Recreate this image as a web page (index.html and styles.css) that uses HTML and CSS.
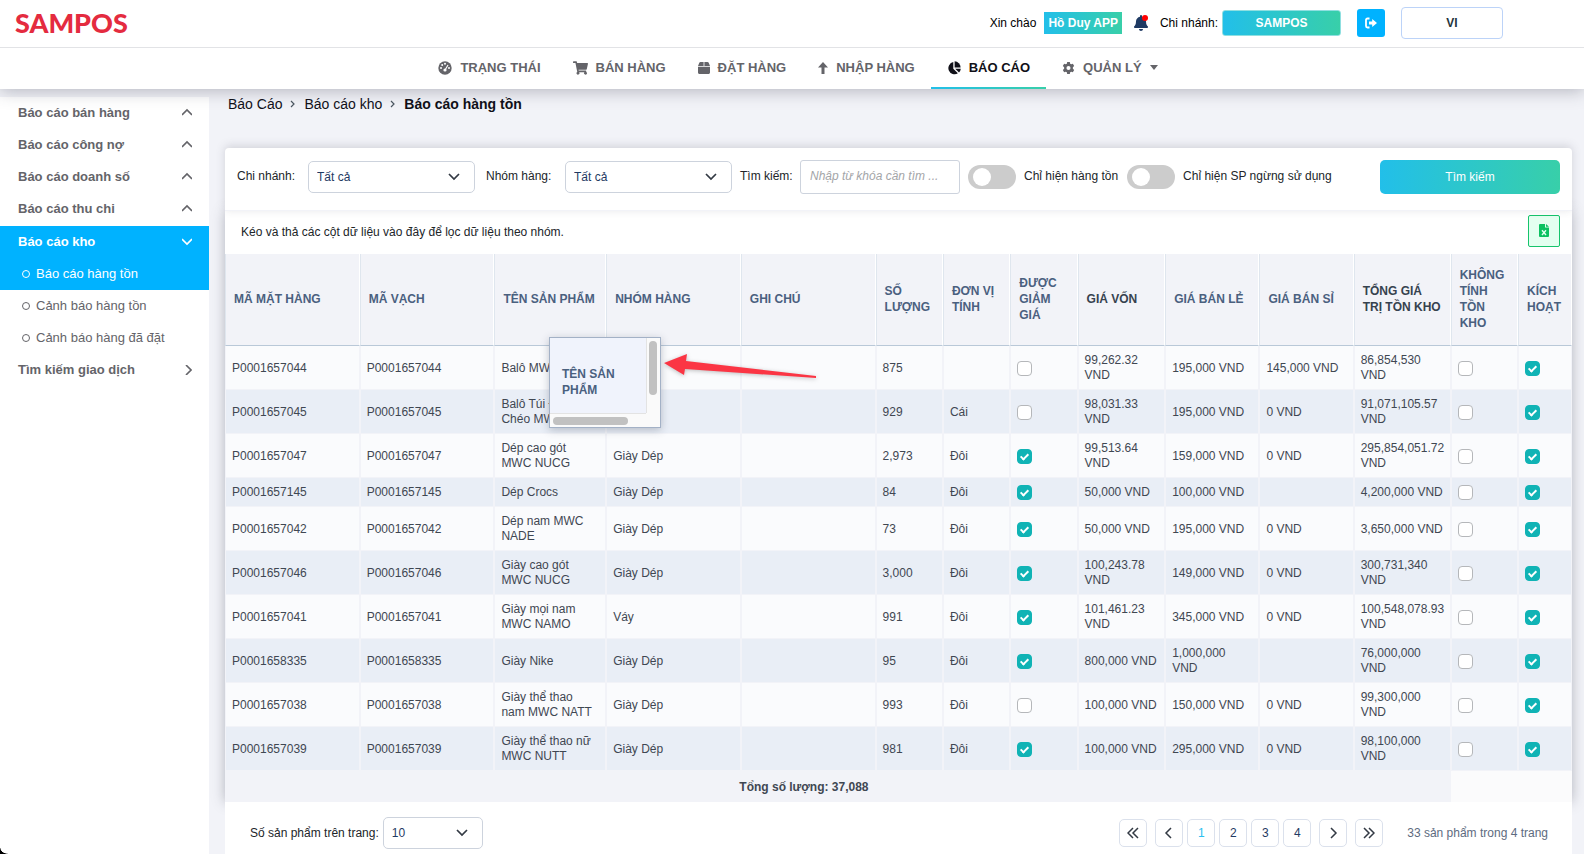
FILE: index.html
```html
<!DOCTYPE html>
<html lang="vi">
<head>
    <meta charset="UTF-8">
    <meta name="viewport" content="width=device-width, initial-scale=1.0">
    <title>Báo cáo hàng tồn</title>
    <link rel="stylesheet" href="styles.css">
</head>
<body>

<!-- Header -->
<header class="header">
    <div class="topbar">
        <a href="#" class="logo">SAMPOS</a>
        <div class="user-area">
            <span>Xin chào</span>
            <a href="#" class="user-name">Hồ Duy APP</a>
            <button type="button" class="bell" aria-label="Thông báo">
                <svg width="14" height="16" viewBox="0 0 448 512"><path fill="#1f3a63" d="M224 512c35 0 64-29 64-64H160c0 35 29 64 64 64zm215-150c-19-21-55-52-55-154 0-78-54-140-128-155V32a32 32 0 1 0-64 0v21C118 68 64 130 64 208c0 102-36 133-55 154-6 6-9 14-9 22 0 16 13 32 32 32h384c19 0 32-16 32-32 0-8-3-16-9-22z"/></svg>
                <span class="dot"></span>
            </button>
            <span>Chi nhánh:</span>
            <button type="button" class="branch">SAMPOS</button>
            <button type="button" class="logout" aria-label="Đăng xuất">
                <svg width="12" height="12" viewBox="0 0 12 12"><path d="M4.500 1.500H2.500a1.500 1.500 0 0 0-1.500 1.500v6a1.500 1.500 0 0 0 1.500 1.500h2" fill="none" stroke="#fff" stroke-width="1.800"/><path fill="#fff" d="M4 4.600h3.200V2L12 6 7.200 10V7.400H4z"/></svg>
            </button>
            <button type="button" class="lang">VI</button>
        </div>
    </div>
    <nav class="main-nav">
        <a href="#">
            <svg width="14" height="14" viewBox="0 0 14 14"><circle cx="7" cy="7" r="6.700"/><g fill="#fff"><circle cx="3" cy="7" r="1"/><circle cx="4.200" cy="4" r="1"/><circle cx="7" cy="2.800" r="1"/><circle cx="11" cy="7" r="1"/><circle cx="7" cy="9" r="1.600"/></g><path d="M7 9l3-5" stroke="#fff" stroke-width="1.200"/></svg>
            TRẠNG THÁI
        </a>
        <a href="#">
            <svg width="15" height="14" viewBox="0 0 576 512"><path d="M528 301l47-208c4-15-8-29-23-29H159l-9-45C148 8 138 0 126 0H24C11 0 0 11 0 24v16c0 13 11 24 24 24h70l70 343a56 56 0 1 0 67 9h210a56 56 0 1 0 64-11l5-25c4-15-8-29-23-29H218l-6-32h293c11 0 20-8 23-18z"/></svg>
            BÁN HÀNG
        </a>
        <a href="#">
            <svg width="12" height="14" viewBox="0 0 12 14"><path d="M2.500 1h3.100v4H0l1.200-3.100C1.400 1.300 1.900 1 2.500 1zM6.400 1h3.100c.6 0 1.100.3 1.300.9L12 5H6.400zM0 5.700h12v5.800c0 .8-.7 1.500-1.500 1.500h-9C.7 13 0 12.300 0 11.500z"/></svg>
            ĐẶT HÀNG
        </a>
        <a href="#">
            <svg width="10" height="14" viewBox="0 0 10 14"><path d="M5 1l5 5.500H6.500V13h-3V6.500H0z"/></svg>
            NHẬP HÀNG
        </a>
        <a href="#" class="active">
            <svg width="14" height="14" viewBox="0 0 14 14"><path d="M6.300 1v6.700l4.600 4.600A6.200 6.200 0 1 1 6.300 1z"/><path d="M7.600.3a6.200 6.200 0 0 1 6 6.200h-6z"/><path d="M8.200 7.800h5.600a6 6 0 0 1-1.800 3.800z"/></svg>
            BÁO CÁO
        </a>
        <a href="#" class="more">
            <svg width="13" height="14" viewBox="0 0 14 14"><path fill-rule="evenodd" d="M5.600.5h2.800l.4 1.800 1.100.7 1.800-.6 1.400 2.400-1.400 1.300v1.800l1.400 1.300-1.400 2.400-1.800-.6-1.100.7-.4 1.800H5.600l-.4-1.800-1.100-.7-1.800.6L.9 9.200l1.400-1.300V6.100L.9 4.800l1.400-2.400 1.800.6 1.100-.7zM7 4.800a2.200 2.200 0 1 0 0 4.400 2.200 2.200 0 0 0 0-4.400z"/></svg>
            QUẢN LÝ
            <svg width="8" height="5" viewBox="0 0 8 5"><path d="M0 0h8L4 5z"/></svg>
        </a>
    </nav>
</header>

<div class="layout">
    <!-- Menu bên trái -->
    <aside class="sidebar">
        <a href="#" class="group">Báo cáo bán hàng <svg class="chev" viewBox="0 0 10 10"><path d="M0 7l5-5 5 5"/></svg></a>
        <a href="#" class="group">Báo cáo công nợ <svg class="chev" viewBox="0 0 10 10"><path d="M0 7l5-5 5 5"/></svg></a>
        <a href="#" class="group">Báo cáo doanh số <svg class="chev" viewBox="0 0 10 10"><path d="M0 7l5-5 5 5"/></svg></a>
        <a href="#" class="group">Báo cáo thu chi <svg class="chev" viewBox="0 0 10 10"><path d="M0 7l5-5 5 5"/></svg></a>
        <a href="#" class="group active">Báo cáo kho <svg class="chev" viewBox="0 0 10 10"><path d="M0 2l5 5 5-5"/></svg></a>
        <a href="#" class="sub active">Báo cáo hàng tồn</a>
        <a href="#" class="sub">Cảnh báo hàng tồn</a>
        <a href="#" class="sub">Cảnh báo hàng đã đặt</a>
        <a href="#" class="group">Tìm kiếm giao dịch <svg class="chev" viewBox="0 0 10 10"><path d="M4 0l5 5-5 5"/></svg></a>
    </aside>

    <main class="content">
        <div class="breadcrumb">
            <a href="#">Báo Cáo</a>
            <svg width="6" height="8" viewBox="0 0 6 8"><path d="M1 1l3 3-3 3"/></svg>
            <a href="#">Báo cáo kho</a>
            <svg width="6" height="8" viewBox="0 0 6 8"><path d="M1 1l3 3-3 3"/></svg>
            <strong>Báo cáo hàng tồn</strong>
        </div>

        <section class="report">
            <!-- Bộ lọc -->
            <form class="filters">
                <label for="chiNhanh" class="label-branch">Chi nhánh:</label>
                <select id="chiNhanh"><option>Tất cả</option></select>
                <label for="nhomHang" class="label-group">Nhóm hàng:</label>
                <select id="nhomHang"><option>Tất cả</option></select>
                <label for="tuKhoa" class="label-search">Tìm kiếm:</label>
                <input type="text" id="tuKhoa" placeholder="Nhập từ khóa cần tìm ...">
                <input type="checkbox" class="switch" id="hangTon">
                <label for="hangTon" class="label-switch">Chỉ hiện hàng tồn</label>
                <input type="checkbox" class="switch" id="ngungSuDung">
                <label for="ngungSuDung" class="label-switch">Chỉ hiện SP ngừng sử dụng</label>
                <button type="button" class="search-btn">Tìm kiếm</button>
            </form>

            <div class="grid-panel">
                <div class="group-bar">
                    <span>Kéo và thả các cột dữ liệu vào đây để lọc dữ liệu theo nhóm.</span>
                    <button type="button" class="excel" aria-label="Xuất Excel">
                        <svg width="10" height="13" viewBox="0 0 10 13"><path fill="#0bc161" d="M1 0h5v3.500h4V12a1 1 0 0 1-1 1H1a1 1 0 0 1-1-1V1a1 1 0 0 1 1-1zm6 0l3 2.700H7z"/><path d="M3 6.200l4 4.800M7 6.200L3 11" stroke="#e3fff0" stroke-width="1.400"/></svg>
                    </button>
                </div>

                <div class="grid">
                    <table>
                        <colgroup>
                            <col class="c-code"><col class="c-code"><col class="c-name"><col class="c-code"><col class="c-code">
                            <col class="c-small"><col class="c-small"><col class="c-small"><col class="c-cost">
                            <col class="c-price"><col class="c-price"><col class="c-total"><col class="c-small"><col class="c-active">
                        </colgroup>
                        <thead>
                            <tr>
                                <th>MÃ MẶT HÀNG</th>
                                <th>MÃ VẠCH</th>
                                <th>TÊN SẢN PHẨM</th>
                                <th>NHÓM HÀNG</th>
                                <th>GHI CHÚ</th>
                                <th>SỐ LƯỢNG</th>
                                <th>ĐƠN VỊ TÍNH</th>
                                <th>ĐƯỢC GIẢM GIÁ</th>
                                <th class="dark">GIÁ VỐN</th>
                                <th>GIÁ BÁN LẺ</th>
                                <th>GIÁ BÁN SỈ</th>
                                <th class="dark">TỔNG GIÁ TRỊ TỒN KHO</th>
                                <th>KHÔNG TÍNH TỒN KHO</th>
                                <th>KÍCH HOẠT</th>
                            </tr>
                        </thead>
                        <tbody>
                            <tr>
                                <td>P0001657044</td><td>P0001657044</td><td>Balô MWC</td><td></td><td></td>
                                <td>875</td><td></td><td><input type="checkbox" aria-label="Được giảm giá"></td>
                                <td>99,262.32 VND</td><td>195,000 VND</td><td>145,000 VND</td><td>86,854,530 VND</td>
                                <td><input type="checkbox" aria-label="Không tính tồn kho"></td><td><input type="checkbox" aria-label="Kích hoạt" checked></td>
                            </tr>
                            <tr>
                                <td>P0001657045</td><td>P0001657045</td><td>Balô Túi Đeo Chéo MWC</td><td></td><td></td>
                                <td>929</td><td>Cái</td><td><input type="checkbox" aria-label="Được giảm giá"></td>
                                <td>98,031.33 VND</td><td>195,000 VND</td><td>0 VND</td><td>91,071,105.57 VND</td>
                                <td><input type="checkbox" aria-label="Không tính tồn kho"></td><td><input type="checkbox" aria-label="Kích hoạt" checked></td>
                            </tr>
                            <tr>
                                <td>P0001657047</td><td>P0001657047</td><td>Dép cao gót MWC NUCG</td><td>Giày Dép</td><td></td>
                                <td>2,973</td><td>Đôi</td><td><input type="checkbox" aria-label="Được giảm giá" checked></td>
                                <td>99,513.64 VND</td><td>159,000 VND</td><td>0 VND</td><td>295,854,051.72 VND</td>
                                <td><input type="checkbox" aria-label="Không tính tồn kho"></td><td><input type="checkbox" aria-label="Kích hoạt" checked></td>
                            </tr>
                            <tr>
                                <td>P0001657145</td><td>P0001657145</td><td>Dép Crocs</td><td>Giày Dép</td><td></td>
                                <td>84</td><td>Đôi</td><td><input type="checkbox" aria-label="Được giảm giá" checked></td>
                                <td>50,000 VND</td><td>100,000 VND</td><td></td><td>4,200,000 VND</td>
                                <td><input type="checkbox" aria-label="Không tính tồn kho"></td><td><input type="checkbox" aria-label="Kích hoạt" checked></td>
                            </tr>
                            <tr>
                                <td>P0001657042</td><td>P0001657042</td><td>Dép nam MWC NADE</td><td>Giày Dép</td><td></td>
                                <td>73</td><td>Đôi</td><td><input type="checkbox" aria-label="Được giảm giá" checked></td>
                                <td>50,000 VND</td><td>195,000 VND</td><td>0 VND</td><td>3,650,000 VND</td>
                                <td><input type="checkbox" aria-label="Không tính tồn kho"></td><td><input type="checkbox" aria-label="Kích hoạt" checked></td>
                            </tr>
                            <tr>
                                <td>P0001657046</td><td>P0001657046</td><td>Giày cao gót MWC NUCG</td><td>Giày Dép</td><td></td>
                                <td>3,000</td><td>Đôi</td><td><input type="checkbox" aria-label="Được giảm giá" checked></td>
                                <td>100,243.78 VND</td><td>149,000 VND</td><td>0 VND</td><td>300,731,340 VND</td>
                                <td><input type="checkbox" aria-label="Không tính tồn kho"></td><td><input type="checkbox" aria-label="Kích hoạt" checked></td>
                            </tr>
                            <tr>
                                <td>P0001657041</td><td>P0001657041</td><td>Giày mọi nam MWC NAMO</td><td>Váy</td><td></td>
                                <td>991</td><td>Đôi</td><td><input type="checkbox" aria-label="Được giảm giá" checked></td>
                                <td>101,461.23 VND</td><td>345,000 VND</td><td>0 VND</td><td>100,548,078.93 VND</td>
                                <td><input type="checkbox" aria-label="Không tính tồn kho"></td><td><input type="checkbox" aria-label="Kích hoạt" checked></td>
                            </tr>
                            <tr>
                                <td>P0001658335</td><td>P0001658335</td><td>Giày Nike</td><td>Giày Dép</td><td></td>
                                <td>95</td><td>Đôi</td><td><input type="checkbox" aria-label="Được giảm giá" checked></td>
                                <td>800,000 VND</td><td>1,000,000 VND</td><td></td><td>76,000,000 VND</td>
                                <td><input type="checkbox" aria-label="Không tính tồn kho"></td><td><input type="checkbox" aria-label="Kích hoạt" checked></td>
                            </tr>
                            <tr>
                                <td>P0001657038</td><td>P0001657038</td><td>Giày thể thao nam MWC NATT</td><td>Giày Dép</td><td></td>
                                <td>993</td><td>Đôi</td><td><input type="checkbox" aria-label="Được giảm giá"></td>
                                <td>100,000 VND</td><td>150,000 VND</td><td>0 VND</td><td>99,300,000 VND</td>
                                <td><input type="checkbox" aria-label="Không tính tồn kho"></td><td><input type="checkbox" aria-label="Kích hoạt" checked></td>
                            </tr>
                            <tr>
                                <td>P0001657039</td><td>P0001657039</td><td>Giày thể thao nữ MWC NUTT</td><td>Giày Dép</td><td></td>
                                <td>981</td><td>Đôi</td><td><input type="checkbox" aria-label="Được giảm giá" checked></td>
                                <td>100,000 VND</td><td>295,000 VND</td><td>0 VND</td><td>98,100,000 VND</td>
                                <td><input type="checkbox" aria-label="Không tính tồn kho"></td><td><input type="checkbox" aria-label="Kích hoạt" checked></td>
                            </tr>
                        </tbody>
                        <tfoot>
                            <tr>
                                <td colspan="5" class="sum">Tổng số lượng: 37,088</td>
                                <td colspan="7"></td>
                                <td colspan="2" class="blank"></td>
                            </tr>
                        </tfoot>
                    </table>

                    <!-- Cột đang được kéo -->
                    <div class="drag-box">
                        <div class="drag-cell">TÊN SẢN PHẨM</div>
                        <div class="track-v"><div class="thumb"></div></div>
                        <div class="track-h"><div class="thumb"></div></div>
                    </div>
                    <svg class="arrow" width="156" height="28" viewBox="0 0 156 28"><path fill="#fb3544" d="M2 11l23-9-1 7 130 15v2L23 17l-1 6z"/></svg>
                </div>
            </div>

            <!-- Phân trang -->
            <div class="pager">
                <label for="soDong">Số sản phẩm trên trang:</label>
                <select id="soDong" class="page-size"><option>10</option></select>
                <div class="pages">
                    <button type="button" class="jump" aria-label="Trang đầu"><svg viewBox="0 0 12 12"><path d="M6 1L1 6l5 5M11 1L6 6l5 5"/></svg></button>
                    <button type="button" aria-label="Trang trước"><svg viewBox="0 0 12 12"><path d="M8 1L3 6l5 5"/></svg></button>
                    <button type="button" class="current">1</button>
                    <button type="button">2</button>
                    <button type="button">3</button>
                    <button type="button">4</button>
                    <button type="button" class="next" aria-label="Trang sau"><svg viewBox="0 0 12 12"><path d="M4 1l5 5-5 5"/></svg></button>
                    <button type="button" class="next" aria-label="Trang cuối"><svg viewBox="0 0 12 12"><path d="M1 1l5 5-5 5M6 1l5 5-5 5"/></svg></button>
                </div>
                <span class="page-info">33 sản phẩm trong 4 trang</span>
            </div>
        </section>
    </main>
</div>
<div class="window-corner"></div>

</body>
</html>
```

FILE: styles.css
```css
*, *::before, *::after {
    box-sizing: border-box;
}
body {
    margin: 0;
    min-height: 100vh;
    display: flex;
    flex-direction: column;
    background: #f2f3f8;
    font-family: "Liberation Sans", Arial, sans-serif;
    font-size: 12px;
    line-height: 16px;
    color: #212529;
}
a {
    color: inherit;
    text-decoration: none;
}
button, input, select {
    font-family: inherit;
    font-size: 12px;
    margin: 0;
}
button {
    display: flex;
    align-items: center;
    justify-content: center;
    padding: 0;
    cursor: pointer;
}

/* Header */
.header {
    position: relative;
    z-index: 2;
    background: #fff;
    box-shadow: 0 2px 16px rgba(60, 62, 80, 0.35);
}
.topbar {
    display: flex;
    align-items: center;
    justify-content: space-between;
    height: 48px;
    padding: 0 81px 1px 15px;
    border-bottom: 1px solid #e2e3e6;
}
.logo {
    padding-bottom: 1px;
    font-family: Lato, sans-serif;
    font-size: 27px;
    line-height: 32px;
    font-weight: 900;
    color: #e42b3f;
}
.user-area {
    display: flex;
    align-items: center;
    color: #000;
}
.user-name {
    margin: 0 12px 0 8px;
    padding: 3px 4px;
    color: #fff;
    font-weight: bold;
    background: linear-gradient(90deg, #22bfe9, #38cfa9);
}
.bell {
    position: relative;
    margin-right: 12px;
    border: none;
    background: none;
}
.dot {
    position: absolute;
    top: 0;
    right: 0;
    width: 6px;
    height: 6px;
    border-radius: 50%;
    background: #f00;
}
.branch {
    width: 119px;
    height: 26px;
    margin: 0 16px 0 4px;
    border: 1px solid #8fdfe0;
    border-radius: 3px;
    color: #fff;
    font-weight: bold;
    background: linear-gradient(90deg, #22bfe9, #38cfa9);
}
.logout {
    width: 28px;
    height: 28px;
    margin-right: 16px;
    border: none;
    border-radius: 3px;
    background: #00b2ff;
}
.lang {
    width: 102px;
    height: 32px;
    border: 1px solid #bcd3f8;
    border-radius: 4px;
    background: #fff;
    color: #24343c;
    font-weight: bold;
}

.main-nav {
    display: flex;
    justify-content: center;
    height: 41px;
}
.main-nav a {
    display: flex;
    align-items: center;
    gap: 8px;
    padding: 0 16px;
    border-bottom: 2px solid transparent;
    color: #646469;
    font-size: 13px;
    font-weight: bold;
}
.main-nav svg {
    fill: currentColor;
}
.main-nav .active {
    color: #101018;
    border-image: linear-gradient(90deg, #22bfe9, #38cfa9) 1;
}
.main-nav .more {
    padding-right: 4px;
}

/* Sidebar */
.layout {
    flex: 1;
    display: flex;
}
.sidebar {
    width: 209px;
    margin-top: 8px;
    background: #fff;
    color: #646469;
    font-size: 13px;
}
.sidebar a {
    display: flex;
    align-items: center;
    height: 32px;
}
.group {
    justify-content: space-between;
    padding: 0 17px 0 18px;
    font-weight: bold;
}
.group.active {
    margin-top: 1px;
}
.chev {
    width: 10px;
    height: 10px;
    fill: none;
    stroke: currentColor;
    stroke-width: 1.6;
}
.sub {
    padding-left: 22px;
}
.sub::before {
    content: "";
    width: 8px;
    height: 8px;
    margin-right: 6px;
    border: 1px solid currentColor;
    border-radius: 50%;
}
.sidebar .active {
    background: #00b2ff;
    color: #fff;
}

/* Content */
.content {
    flex: 1;
    min-width: 0;
    display: flex;
    flex-direction: column;
    padding: 6px 12px 0 16px;
}
.breadcrumb {
    display: flex;
    align-items: center;
    gap: 8px;
    height: 18px;
    margin: 0 0 35px 3px;
    font-size: 14px;
    color: #101018;
}
.breadcrumb svg {
    fill: none;
    stroke: #4a5560;
    stroke-width: 1.2;
}
.report {
    flex: 1;
    display: flex;
    flex-direction: column;
}
.filters {
    position: relative;
    z-index: 1;
    display: flex;
    align-items: center;
    height: 63px;
    padding: 0 12px 5px;
    border-bottom: 1px solid #f2f3f8;
    border-radius: 4px 4px 0 0;
    background: #fff;
    box-shadow: 0 -2px 10px rgba(60, 62, 80, 0.18);
}
.filters label {
    padding-bottom: 2px;
}
select {
    appearance: none;
    width: 167px;
    height: 32px;
    padding: 0 8px;
    border: 1px solid #cdd3dd;
    border-radius: 5px;
    color: #1f3a63;
    background: #fff url("data:image/svg+xml,%3Csvg xmlns='http://www.w3.org/2000/svg' width='12' height='8'%3E%3Cpath d='M1 1l5 5 5-5' fill='none' stroke='%23333a44' stroke-width='1.700'/%3E%3C/svg%3E") no-repeat right 14px center;
}
.label-branch {
    width: 71px;
}
.label-group {
    width: 90px;
    padding-left: 11px;
}
.label-search {
    width: 68px;
    padding-left: 8px;
}
.filters input[type="text"] {
    width: 160px;
    height: 34px;
    margin-right: 8px;
    padding: 0 9px 2px;
    border: 1px solid #cdd3dd;
    border-radius: 3px;
}
.filters input::placeholder {
    color: #a3a5a8;
    font-style: italic;
}
.switch {
    appearance: none;
    width: 48px;
    height: 24px;
    padding: 3px 5px;
    border-radius: 12px;
    background: #ccc;
}
.switch::before {
    content: "";
    display: block;
    width: 18px;
    height: 18px;
    border-radius: 50%;
    background: #fff;
}
.label-switch {
    padding: 0 9px 0 8px;
}
.search-btn {
    width: 180px;
    height: 34px;
    margin-left: auto;
    border: none;
    border-radius: 5px;
    color: #fff;
    background: linear-gradient(90deg, #22bfe9, #38cfa9);
}
.grid-panel {
    box-shadow: 0 0 12px rgba(60, 62, 80, 0.35);
}
.group-bar {
    display: flex;
    align-items: center;
    justify-content: space-between;
    height: 43px;
    padding: 0 12px 4px 16px;
    background: #fff;
}
.group-bar span {
    padding-top: 2px;
}
.excel {
    width: 32px;
    height: 32px;
    border: 1px solid #16c46c;
    border-radius: 2px;
    background: #e3fff0;
}

/* Table */
.grid {
    position: relative;
}
table {
    width: 100%;
    table-layout: fixed;
    border-collapse: separate;
    border-spacing: 0;
    color: #3f4752;
    background: #fafbfd;
}
.c-code {
    width: 10%;
}
.c-name {
    width: 8.3%;
}
.c-small {
    width: 5%;
}
.c-cost {
    width: 6.5%;
}
.c-price {
    width: 7%;
}
.c-total {
    width: 7.2%;
}
.c-active {
    width: 4%;
}
th {
    height: 92px;
    padding: 0 8px 2px;
    border-left: 1px solid #dfe6ee;
    border-right: 1px solid #fff;
    border-bottom: 1px solid #b9c8d8;
    background: #f2f3f8;
    color: #4a607f;
    text-align: left;
}
th.dark {
    color: #36424f;
}
td {
    height: 29px;
    padding: 7px 6px 6px;
    border-left: 1px solid #f2f3f8;
    border-right: 1px solid #f2f3f8;
    border-bottom: 1px solid #f2f3f8;
    line-height: 15px;
}
tbody tr:nth-child(even) {
    background: #e9eef6;
}
td input {
    appearance: none;
    display: block;
    position: relative;
    width: 15px;
    height: 15px;
    border: 1px solid #b5b7ba;
    border-radius: 4px;
    background: #fff;
}
td input:checked {
    border-color: #10b3b5;
    background: #10b3b5;
}
td input:checked::after {
    content: "";
    position: absolute;
    left: 4px;
    top: 2px;
    width: 5px;
    height: 8px;
    border: solid #fff;
    border-width: 0 2px 2px 0;
    transform: rotate(45deg);
}
tfoot td {
    height: 31px;
    border: none;
    background: #f2f3f8;
    font-weight: bold;
}
.sum {
    padding-right: 7px;
    text-align: right;
}
tfoot .blank {
    background: #fbfbfc;
}

/* Dragged column */
.drag-box {
    position: absolute;
    left: 324px;
    top: 83px;
    display: grid;
    grid-template: 75px 14px / 96px 14px;
    border: 1px solid #a3b1c6;
    background: #fafafa;
    box-shadow: 0 2px 8px rgba(60, 70, 90, 0.3);
}
.drag-cell {
    display: flex;
    align-items: center;
    padding: 12px 12px 0;
    background: #f0f3fc;
    color: #4a607f;
    font-weight: bold;
}
.track-v {
    padding: 3px 2px;
    border-left: 1px solid #e3e3e3;
}
.track-h {
    padding: 3px;
    border-top: 1px solid #e3e3e3;
}
.thumb {
    border-radius: 4px;
    background: #c1c1c1;
}
.track-v .thumb {
    width: 8px;
    height: 54px;
}
.track-h .thumb {
    width: 75px;
    height: 8px;
}
.arrow {
    position: absolute;
    left: 437px;
    top: 98px;
    filter: drop-shadow(0 1px 2px rgba(0, 0, 0, 0.25));
}

/* Pagination */
.pager {
    position: relative;
    flex: 1;
    display: flex;
    align-items: center;
    padding: 10px 24px 0 25px;
    background: #fff;
}
.page-size {
    width: 100px;
    margin: 0 auto 0 4px;
}
.pages {
    display: flex;
    gap: 4px;
    margin-right: 24px;
}
.pages button {
    width: 28px;
    height: 28px;
    border: 1px solid #dbe1ec;
    border-radius: 5px;
    background: #fff;
    color: #1f3a63;
}
.pages svg {
    width: 12px;
    height: 12px;
    fill: none;
    stroke: #333a44;
    stroke-width: 1.5;
}
.pages .jump {
    margin-right: 4px;
}
.pages .next {
    margin-left: 4px;
}
.pages .current {
    color: #2cc0f0;
}
.page-info {
    color: #5d6b80;
}
.window-corner {
    position: fixed;
    left: 0;
    bottom: 0;
    width: 8px;
    height: 6px;
    background: radial-gradient(ellipse 8px 6px at 100% 0, transparent 90%, #000);
}
```
